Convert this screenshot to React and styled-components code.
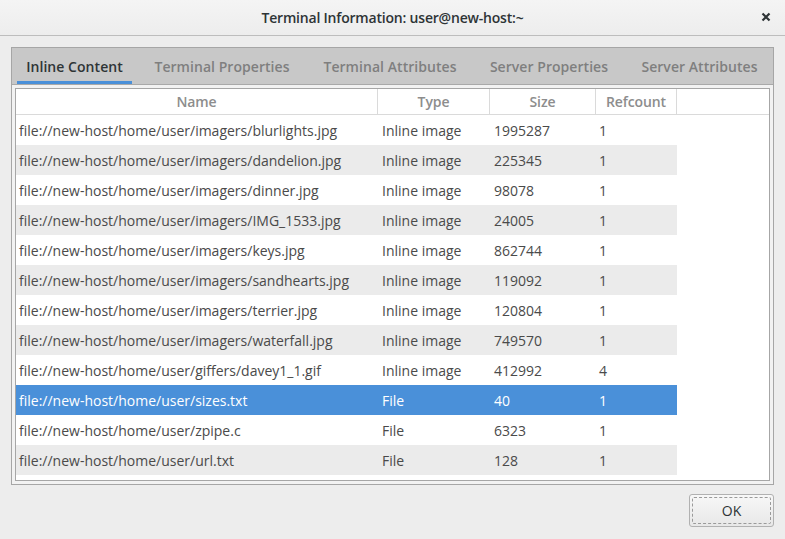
import React from "react";
import styled, { createGlobalStyle } from "styled-components";

const Global = createGlobalStyle`
  html, body { margin: 0; padding: 0; background: #ededed; }
  body { font-family: "Open Sans", "Noto Sans", sans-serif; }
  * { box-sizing: border-box; }
`;

const Window = styled.div`
  width: 785px;
  height: 539px;
  display: flex;
  flex-direction: column;
  background: #ededed;
  overflow: hidden;
`;

const TitleBar = styled.div`
  height: 36px;
  flex: none;
  display: flex;
  align-items: center;
  justify-content: center;
  position: relative;
  background: linear-gradient(#f4f4f4, #ededed);
  border-bottom: 1px solid #bdbdbd;
  font-size: 14px;
  font-weight: 600;
  color: #2e3436;
  letter-spacing: -0.2px;
`;

const CloseBtn = styled.div`
  position: absolute;
  right: 13px;
  top: 11px;
  width: 12px;
  height: 12px;
  display: flex;
`;

const Body = styled.div`
  flex: 1;
  display: flex;
  flex-direction: column;
  padding: 11px 11px 0 11px;
`;

const Notebook = styled.div`
  width: 763px;
  height: 438px;
  border: 1px solid #a6a6a6;
  display: flex;
  flex-direction: column;
  background: #f2f2f2;
`;

const TabStrip = styled.div`
  height: 37px;
  flex: none;
  display: flex;
  align-items: stretch;
  background: #c8c8c8;
  border-bottom: 1px solid #a9a9a9;
  padding-left: 5px;
`;

const Tab = styled.div`
  width: ${(p) => p.w}px;
  flex: none;
  display: flex;
  align-items: center;
  justify-content: center;
  font-size: 14px;
  font-weight: 600;
  letter-spacing: 0.05px;
  color: ${(p) => (p.active ? "#2e3436" : "#7f7f7f")};
  border-bottom: 3px solid ${(p) => (p.active ? "#4a90d9" : "transparent")};
  padding-top: 3px;
`;

const Page = styled.div`
  flex: 1;
  padding: 3px;
  display: flex;
`;

const Tree = styled.div`
  flex: 1;
  border: 1px solid #a6a6a6;
  background: #ffffff;
  display: flex;
  flex-direction: column;
`;

const HeaderRow = styled.div`
  display: grid;
  grid-template-columns: 362px 112px 106px 81px 1fr;
  height: 26px;
  border-bottom: 1px solid #dadada;
`;

const HeaderCell = styled.div`
  display: flex;
  align-items: center;
  justify-content: center;
  font-size: 14px;
  font-weight: 600;
  color: #8d8d8d;
  letter-spacing: -0.1px;
  border-right: ${(p) => (p.last ? "none" : "1px solid #dadada")};
`;

const Row = styled.div`
  display: grid;
  grid-template-columns: 362px 112px 106px 81px;
  width: 661px;
  height: 30px;
  background: ${(p) => (p.selected ? "#4a90d9" : p.odd ? "#ebebeb" : "#ffffff")};
  color: ${(p) => (p.selected ? "#ffffff" : "#4a4a4a")};
`;

const Cell = styled.div`
  display: flex;
  align-items: center;
  padding-left: ${(p) => p.pl || 3}px;
  font-size: 14px;
  white-space: nowrap;
  overflow: hidden;
  letter-spacing: 0px;
`;

const Footer = styled.div`
  flex: 1;
  display: flex;
  justify-content: flex-end;
  align-items: flex-start;
  padding: 9px 0 0 0;
`;

const OkButton = styled.button`
  width: 85px;
  height: 33px;
  border: 1px solid #b1b1b1;
  border-radius: 3px;
  background: linear-gradient(#f7f7f7, #e8e8e8);
  font-family: "Open Sans", "Noto Sans", sans-serif;
  font-size: 14px;
  color: #2e3436;
  position: relative;
  padding: 0;
  &::after {
    content: "";
    position: absolute;
    inset: 2px;
    border: 1px dashed #9a9a9a;
    border-radius: 2px;
  }
`;

const tabs = [
  { label: "Inline Content", w: 115, active: true },
  { label: "Terminal Properties", w: 180 },
  { label: "Terminal Attributes", w: 156 },
  { label: "Server Properties", w: 162 },
  { label: "Server Attributes", w: 139 },
];

const rows = [
  ["file://new-host/home/user/imagers/blurlights.jpg", "Inline image", "1995287", "1"],
  ["file://new-host/home/user/imagers/dandelion.jpg", "Inline image", "225345", "1"],
  ["file://new-host/home/user/imagers/dinner.jpg", "Inline image", "98078", "1"],
  ["file://new-host/home/user/imagers/IMG_1533.jpg", "Inline image", "24005", "1"],
  ["file://new-host/home/user/imagers/keys.jpg", "Inline image", "862744", "1"],
  ["file://new-host/home/user/imagers/sandhearts.jpg", "Inline image", "119092", "1"],
  ["file://new-host/home/user/imagers/terrier.jpg", "Inline image", "120804", "1"],
  ["file://new-host/home/user/imagers/waterfall.jpg", "Inline image", "749570", "1"],
  ["file://new-host/home/user/giffers/davey1_1.gif", "Inline image", "412992", "4"],
  ["file://new-host/home/user/sizes.txt", "File", "40", "1"],
  ["file://new-host/home/user/zpipe.c", "File", "6323", "1"],
  ["file://new-host/home/user/url.txt", "File", "128", "1"],
];

export default function App() {
  return (
    <Window>
      <Global />
      <TitleBar>
        Terminal Information: user@new-host:~
        <CloseBtn>
          <svg width="12" height="12" viewBox="0 0 12 12">
            <path d="M2.5 2.5 L9.5 9.5 M9.5 2.5 L2.5 9.5" stroke="#2e3436" strokeWidth="2.2" strokeLinecap="butt" />
          </svg>
        </CloseBtn>
      </TitleBar>
      <Body>
        <Notebook>
          <TabStrip>
            {tabs.map((t) => (
              <Tab key={t.label} w={t.w} active={t.active}>
                {t.label}
              </Tab>
            ))}
          </TabStrip>
          <Page>
            <Tree>
              <HeaderRow>
                <HeaderCell>Name</HeaderCell>
                <HeaderCell>Type</HeaderCell>
                <HeaderCell>Size</HeaderCell>
                <HeaderCell>Refcount</HeaderCell>
                <HeaderCell last />
              </HeaderRow>
              {rows.map((r, i) => (
                <Row key={r[0]} odd={i % 2 === 1} selected={i === 9}>
                  <Cell pl={3}>{r[0]}</Cell>
                  <Cell pl={4}>{r[1]}</Cell>
                  <Cell pl={4}>{r[2]}</Cell>
                  <Cell pl={3}>{r[3]}</Cell>
                </Row>
              ))}
            </Tree>
          </Page>
        </Notebook>
        <Footer>
          <OkButton>OK</OkButton>
        </Footer>
      </Body>
    </Window>
  );
}
